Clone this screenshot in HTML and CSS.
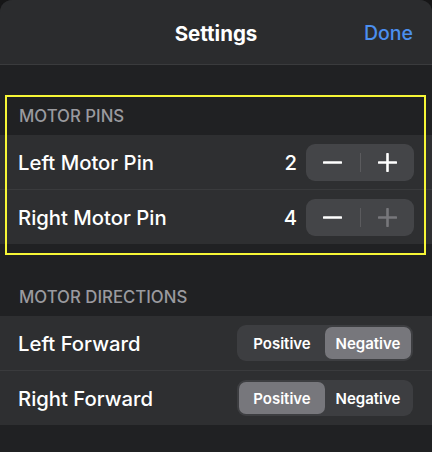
FILE: index.html
```html
<!DOCTYPE html>
<html>
<head>
<meta charset="utf-8">
<link rel="stylesheet" href="styles.css">
</head>
<body>
<div class="sheet">
  <header class="navbar">
    <span></span>
    <h1 class="title">Settings</h1>
    <button class="done">Done</button>
  </header>

  <section class="group group-pins">
    <div class="group-header">MOTOR PINS</div>
    <div class="rows">
      <div class="row">
        <span class="label">Left Motor Pin</span>
        <div class="control">
          <span class="value">2</span>
          <div class="stepper">
            <span class="step"><svg width="19" height="19" viewBox="0 0 19 19"><path d="M1 9.5h17" stroke="#fff" stroke-width="2.6" stroke-linecap="round"/></svg></span>
            <span class="step-div"></span>
            <span class="step"><svg width="19" height="19" viewBox="0 0 19 19"><path d="M1 9.5h17M9.5 1v17" stroke="#fff" stroke-width="2.6" stroke-linecap="round"/></svg></span>
          </div>
        </div>
      </div>
      <div class="row">
        <span class="label">Right Motor Pin</span>
        <div class="control">
          <span class="value">4</span>
          <div class="stepper">
            <span class="step"><svg width="19" height="19" viewBox="0 0 19 19"><path d="M1 9.5h17" stroke="#fff" stroke-width="2.6" stroke-linecap="round"/></svg></span>
            <span class="step-div"></span>
            <span class="step"><svg width="19" height="19" viewBox="0 0 19 19"><path d="M1 9.5h17M9.5 1v17" stroke="#77777b" stroke-width="2.6" stroke-linecap="round"/></svg></span>
          </div>
        </div>
      </div>
    </div>
    <div class="highlight"></div>
  </section>

  <section class="group">
    <div class="group-header">MOTOR DIRECTIONS</div>
    <div class="rows">
      <div class="row">
        <span class="label">Left Forward</span>
        <div class="segmented">
          <span class="seg">Positive</span>
          <span class="seg selected">Negative</span>
        </div>
      </div>
      <div class="row">
        <span class="label">Right Forward</span>
        <div class="segmented">
          <span class="seg selected">Positive</span>
          <span class="seg">Negative</span>
        </div>
      </div>
    </div>
  </section>
</div>
</body>
</html>
```

FILE: styles.css
```css
* { box-sizing: border-box; }
html, body {
  margin: 0;
  padding: 0;
  background: #161617;
  font-family: Inter, "Noto Sans", "Liberation Sans", sans-serif;
  color: #fff;
}
.sheet {
  width: 432px;
  height: 452px;
  background: #202123;
  border-radius: 12px 12px 0 0;
  overflow: hidden;
  position: relative;
}
.navbar {
  height: 65px;
  background: #2b2c2e;
  border-bottom: 1px solid #3a3b3d;
  display: grid;
  grid-template-columns: 1fr auto 1fr;
  align-items: center;
  padding: 2px 19px 0 19px;
}
.title {
  margin: 0;
  font-size: 20.5px;
  font-weight: 700;
}
.done {
  justify-self: end;
  background: none;
  border: 0;
  padding: 0;
  font-family: inherit;
  font-size: 19.5px;
  font-weight: 500;
  color: #4b8fef;
}
.group { position: relative; }
.group-header {
  height: 70px;
  padding: 0 19px 9px;
  display: flex;
  align-items: flex-end;
  font-size: 16.8px;
  font-weight: 500;
  color: #9a9a9f;
}
.group + .group .group-header { height: 72px; padding-bottom: 9px; }
.rows { background: #2e2f31; }
.row {
  height: 54px;
  display: flex;
  align-items: center;
  justify-content: space-between;
  padding: 0 18px;
}
.row + .row { border-top: 1px solid #3a3b3d; height: 55px; }
.label {
  font-size: 20.3px;
  font-weight: 500;
}
.control { display: flex; align-items: center; gap: 9px; }
.value { font-size: 20.3px; font-weight: 500; }
.stepper {
  width: 108px;
  height: 37px;
  background: #444548;
  border-radius: 9px;
  display: flex;
  align-items: center;
}
.step {
  flex: 1;
  display: flex;
  justify-content: center;
  align-items: center;
}
.step-div {
  width: 1px;
  height: 19px;
  background: #5b5b5e;
}
.segmented {
  width: 176px;
  height: 36px;
  background: #3d3e41;
  border-radius: 9px;
  padding: 2px;
  display: flex;
  margin-right: 1px;
}
.seg {
  flex: 1;
  display: flex;
  align-items: center;
  justify-content: center;
  font-size: 15px;
  font-weight: 600;
  border-radius: 7px;
}
.seg.selected { background: #77777c; }
.highlight {
  position: absolute;
  left: 5px;
  top: 30px;
  width: 421px;
  height: 160px;
  border: 2px solid #f6f636;
  pointer-events: none;
}
```
